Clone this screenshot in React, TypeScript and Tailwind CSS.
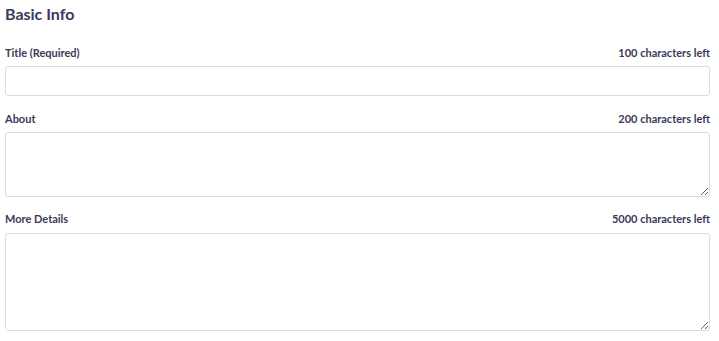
import React from "react";

function Field({ label, left, gap, children }: { label: string; left: string; gap: string; children: React.ReactNode }) {
  return (
    <div className="flex flex-col">
      <div className={`flex items-end justify-between h-[14px] ${gap}`}>
        <span className="text-[11px] font-bold leading-[14px] text-[#3b3a58]">{label}</span>
        <span className="text-[11px] font-bold leading-[14px] text-[#3b3a58]">{left}</span>
      </div>
      {children}
    </div>
  );
}

export default function App() {
  return (
    <div className="w-[719px] h-[341px] bg-white pl-[5px] pr-[9px] pt-[4px] font-['Lato','Liberation_Sans',sans-serif]">
      <h2 className="text-[16px] font-bold leading-[20px] text-[#3b3a58]">Basic Info</h2>
      <div className="mt-[22px]">
        <Field label="Title (Required)" left="100 characters left" gap="mb-[6px]">
          <input className="block h-[30px] w-full rounded-[3px] border border-[#dcdbe4] bg-white outline-none" />
        </Field>
      </div>
      <div className="mt-[16px]">
        <Field label="About" left="200 characters left" gap="mb-[6px]">
          <textarea className="block h-[65px] w-full rounded-[3px] border border-[#dcdbe4] bg-white outline-none" />
        </Field>
      </div>
      <div className="mt-[15px]">
        <Field label="More Details" left="5000 characters left" gap="mb-[7px]">
          <textarea className="block h-[98px] w-full rounded-[3px] border border-[#dcdbe4] bg-white outline-none" />
        </Field>
      </div>
    </div>
  );
}
